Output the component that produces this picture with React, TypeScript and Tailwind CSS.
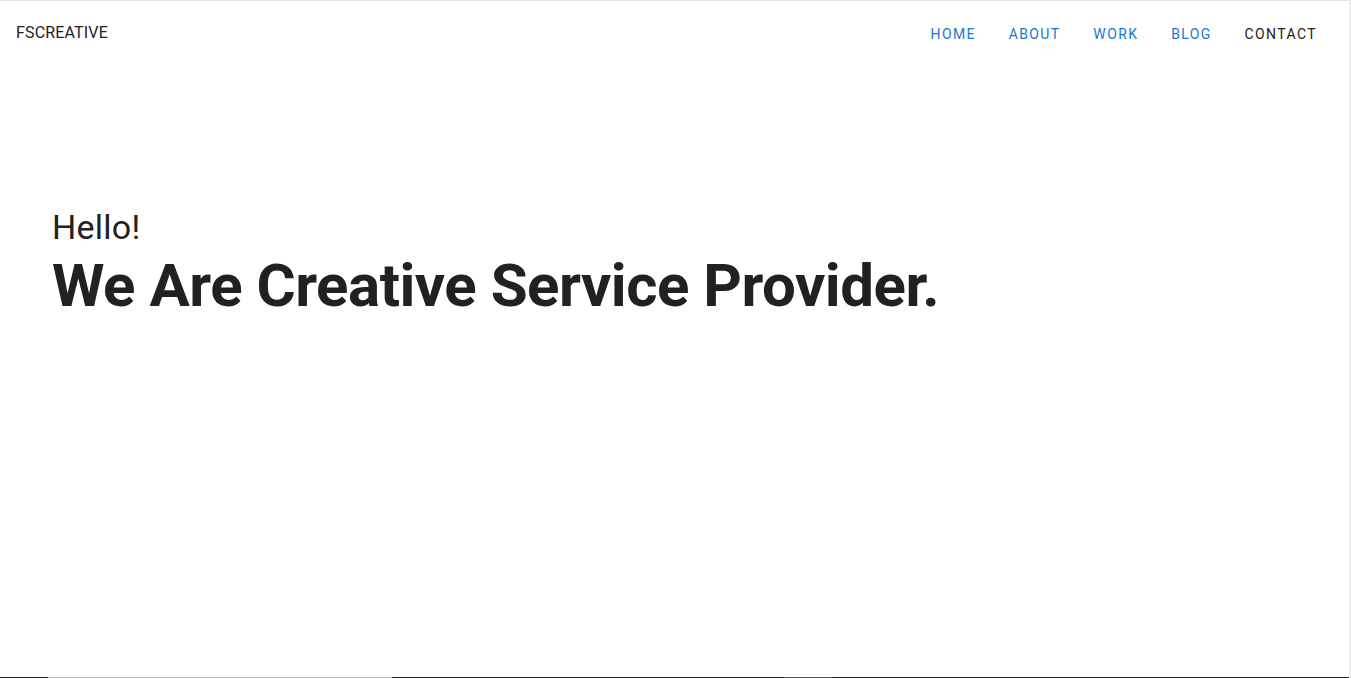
import React from 'react';

const NAV = [
  { label: 'Home', active: true },
  { label: 'About', active: true },
  { label: 'Work', active: true },
  { label: 'Blog', active: true },
  { label: 'Contact', active: false },
];

// strip along the bottom edge (top of the next section peeking in)
const STRIP = [
  { w: 'w-[48px]', c: 'bg-[#222222]' },
  { w: 'w-[344px]', c: 'bg-[#bdbdbd]' },
  { w: 'w-[392px]', c: 'bg-[#222222]' },
  { w: 'w-[48px]', c: 'bg-[#555555]' },
  { w: 'flex-1', c: 'bg-[#222222]' },
];

const App: React.FC = () => {
  return (
    <div className="flex h-[678px] w-[1351px] overflow-hidden bg-white font-['Roboto','Liberation_Sans',sans-serif] text-[#212121]">
      <div className="flex flex-1 flex-col border-t border-[#e0e0e0]">
        {/* Header */}
        <header className="flex h-[63px] items-center justify-between px-4">
          <div className="text-base tracking-[0.01em] text-[#212121]">FSCREATIVE</div>
          <nav className="flex items-center gap-[0.75px] pt-[2px]">
            {NAV.map(n => (
              <button
                key={n.label}
                className={`px-4 py-[6px] text-sm font-normal uppercase tracking-[0.1em] ${
                  n.active ? 'text-[#1976d2]' : 'text-[#212121]'
                }`}
              >
                {n.label}
              </button>
            ))}
          </nav>
        </header>

        {/* Hero */}
        <main className="flex flex-1 flex-col pl-[52px] pt-[143px]">
          <p className="text-[34px] font-normal leading-[1.2] tracking-[0.00735em]">Hello!</p>
          <h1 className="mt-[2px] text-[60px] font-bold leading-[1.2] tracking-[-0.00833em]">
            We Are Creative Service Provider.
          </h1>
        </main>

        <div className="flex h-px">
          {STRIP.map((s, i) => (
            <div key={i} className={`${s.w} ${s.c}`} />
          ))}
        </div>
      </div>
      <div className="w-[2px] bg-[#ececec]" />
    </div>
  );
};

export default App;
